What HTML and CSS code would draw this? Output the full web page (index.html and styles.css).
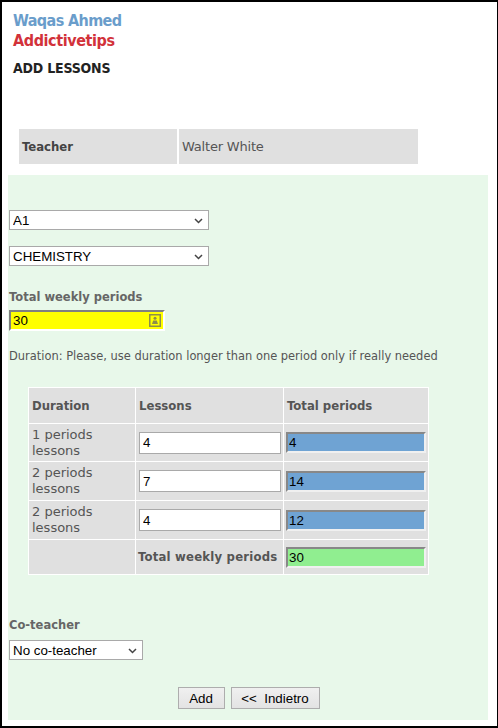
FILE: index.html
```html
<!DOCTYPE html>
<html>
<head>
<meta charset="utf-8">
<link rel="stylesheet" href="styles.css">
</head>
<body>
<div class="frame">
  <div class="head">
    <div class="name">Waqas Ahmed</div>
    <div class="site">Addictivetips</div>
    <h1 class="title">ADD LESSONS</h1>
  </div>
  <table class="teacher">
    <tr><th>Teacher</th><td>Walter White</td></tr>
  </table>
  <div class="panel">
    <div class="sel sel-class">
      <select><option>A1</option></select>
      <svg class="chev" width="9" height="6" viewBox="0 0 9 6"><path d="M1 1 L4.5 4.5 L8 1" fill="none" stroke="#444" stroke-width="1.5"/></svg>
    </div>
    <div class="sel sel-subject">
      <select><option>CHEMISTRY</option></select>
      <svg class="chev" width="9" height="6" viewBox="0 0 9 6"><path d="M1 1 L4.5 4.5 L8 1" fill="none" stroke="#444" stroke-width="1.5"/></svg>
    </div>
    <div class="label label-total">Total weekly periods</div>
    <div class="yellow-wrap">
      <input class="yellow" type="text" value="30">
      <svg class="autofill" width="12" height="13" viewBox="0 0 12 13"><rect x="0.75" y="0.75" width="10.5" height="11.5" fill="none" stroke="#8e8e4a" stroke-width="1.5"/><circle cx="6" cy="4.3" r="1.5" fill="#8e8e4a"/><path d="M3 10 L4.2 6.6 H7.8 L9 10 Z" fill="#8e8e4a"/></svg>
    </div>
    <p class="note">Duration: Please, use duration longer than one period only if really needed</p>
    <table class="lessons">
      <tr class="r-head">
        <th class="c1">Duration</th><th class="c2">Lessons</th><th class="c3">Total periods</th>
      </tr>
      <tr class="r1">
        <td>1 periods lessons</td>
        <td><input class="num" type="text" value="4"></td>
        <td><input class="tot blue" type="text" value="4"></td>
      </tr>
      <tr class="r2">
        <td>2 periods lessons</td>
        <td><input class="num" type="text" value="7"></td>
        <td><input class="tot blue" type="text" value="14"></td>
      </tr>
      <tr class="r3">
        <td>2 periods lessons</td>
        <td><input class="num" type="text" value="4"></td>
        <td><input class="tot blue" type="text" value="12"></td>
      </tr>
      <tr class="r4">
        <td></td>
        <th class="sum-label">Total weekly periods</th>
        <td><input class="tot green" type="text" value="30"></td>
      </tr>
    </table>
    <div class="label label-co">Co-teacher</div>
    <div class="sel sel-co">
      <select><option>No co-teacher</option></select>
      <svg class="chev" width="9" height="6" viewBox="0 0 9 6"><path d="M1 1 L4.5 4.5 L8 1" fill="none" stroke="#444" stroke-width="1.5"/></svg>
    </div>
    <div class="buttons">
      <button class="btn btn-add">Add</button>
      <button class="btn btn-back">&lt;&lt;&nbsp; Indietro</button>
    </div>
  </div>
</div>
</body>
</html>
```
FILE: styles.css
```css
html, body {
  margin: 0;
  padding: 0;
  background: #fff;
}
.frame {
  width: 498px;
  height: 728px;
  box-sizing: border-box;
  border: 2px solid #000;
  border-right-width: 1px;
  padding: 9px 9px 0 6px;
  font-family: "DejaVu Sans", Verdana, sans-serif;
}
.head {
  padding-left: 5px;
}
.name, .site {
  font-family: "DejaVu Sans Condensed", "DejaVu Sans", sans-serif;
  font-weight: bold;
  font-size: 16px;
  line-height: 20px;
  letter-spacing: -0.6px;
}
.site { letter-spacing: -0.4px; }
.name { color: #6a9dcb; }
.site { color: #d2323a; }
.title {
  margin: 9px 0 0 0;
  font-family: "DejaVu Sans Condensed", "DejaVu Sans", sans-serif;
  font-size: 14px;
  line-height: 17px;
  font-weight: bold;
  color: #222;
  letter-spacing: -0.2px;
}
.teacher {
  margin: 52px 0 0 9px;
  border-collapse: separate;
  border-spacing: 2px 0;
  font-size: 13px;
}
.teacher th, .teacher td {
  background: #e0e0e0;
  height: 35px;
  padding: 0 3px;
  text-align: left;
  color: #4a4a4a;
}
.teacher th {
  width: 152px;
  font-family: "DejaVu Sans Condensed", "DejaVu Sans", sans-serif;
  color: #444;
}
.teacher td {
  width: 233px;
  color: #555;
  letter-spacing: -0.2px;
}
.panel {
  margin-top: 11px;
  background: #e8f8ea;
  height: 545px;
  box-sizing: border-box;
  padding: 35px 0 0 1px;
}
.sel {
  position: relative;
  width: 200px;
  height: 20px;
}
.sel select {
  -webkit-appearance: none;
  appearance: none;
  display: block;
  width: 100%;
  height: 20px;
  box-sizing: border-box;
  border: 1px solid #a9a9a9;
  border-radius: 0;
  background: #fff;
  font-family: "Liberation Sans", Arial, sans-serif;
  font-size: 13.33px;
  color: #000;
  padding: 0 0 0 3px;
  margin: 0;
}
.chev {
  position: absolute;
  right: 6px;
  top: 8px;
}
.sel-subject { margin-top: 16px; }
.sel-co { width: 134px; margin-top: 8px; }
.label {
  font-family: "DejaVu Sans", Verdana, sans-serif;
  font-weight: bold;
  font-size: 11.5px;
  line-height: 13px;
  color: #666;
}
.label-total { margin-top: 25px; }
.label-co { margin-top: 44px; }
.yellow-wrap {
  position: relative;
  width: 156px;
  margin-top: 6px;
}
.yellow {
  display: block;
  width: 156px;
  height: 21px;
  box-sizing: border-box;
  border: 2px solid;
  border-color: #808080 #fff #fff #808080;
  background: #ffff00;
  font-family: "Liberation Sans", Arial, sans-serif;
  font-size: 13.33px;
  padding: 0 0 0 2px;
  margin: 0;
  color: #000;
}
.autofill {
  position: absolute;
  right: 4px;
  top: 4px;
}
.note {
  margin: 19px 0 0 0;
  font-size: 11.45px;
  line-height: 13px;
  color: #555;
}
.lessons {
  margin: 24px 0 0 19px;
  border-collapse: separate;
  border-spacing: 1px;
  background: #fff;
  font-size: 13px;
  color: #555;
}
.lessons th, .lessons td {
  background: #e0e0e0;
  text-align: left;
  vertical-align: middle;
  padding: 0 2px 0 3px;
  line-height: 16px;
}
.lessons th {
  font-family: "DejaVu Sans Condensed", "DejaVu Sans", sans-serif;
  color: #555;
}
.lessons .c1 { width: 101px; }
.lessons .c2 { width: 141px; }
.lessons .c3 { width: 139px; }
.r-head th { height: 35px; }
.r1 td { height: 37px; }
.r2 td, .r3 td { height: 38px; }
.r4 td, .r4 th { height: 34px; }
.lessons .sum-label { white-space: nowrap; padding-left: 2px; letter-spacing: 0.2px; }
.num {
  display: block;
  width: 142px;
  height: 22px;
  box-sizing: border-box;
  border: 1px solid #a9a9a9;
  background: #fff;
  font-family: "Liberation Sans", Arial, sans-serif;
  font-size: 13.33px;
  padding: 0 0 0 3px;
  margin: 0;
  color: #000;
}
.tot {
  display: block;
  width: 140px;
  height: 21px;
  box-sizing: border-box;
  border: 2px solid;
  border-color: #888 #f0f0f0 #f0f0f0 #888;
  font-family: "Liberation Sans", Arial, sans-serif;
  font-size: 13.33px;
  padding: 0 0 0 1px;
  margin: 0 0 0 -1px;
  color: #000;
}
.blue { background: #6fa3d3; }
.green { background: #90ee90; }
.buttons {
  display: flex;
  justify-content: center;
  gap: 6px;
  margin-top: 27px;
}
.btn {
  height: 22px;
  box-sizing: border-box;
  border: 1px solid #adadad;
  background: linear-gradient(#f0f0f0, #e3e3e3);
  font-family: "Liberation Sans", Arial, sans-serif;
  font-size: 13.33px;
  color: #000;
  padding: 0 6px;
  margin: 0;
  border-radius: 0;
}
.btn-add { width: 47px; }
.btn-back { width: 89px; }
```
